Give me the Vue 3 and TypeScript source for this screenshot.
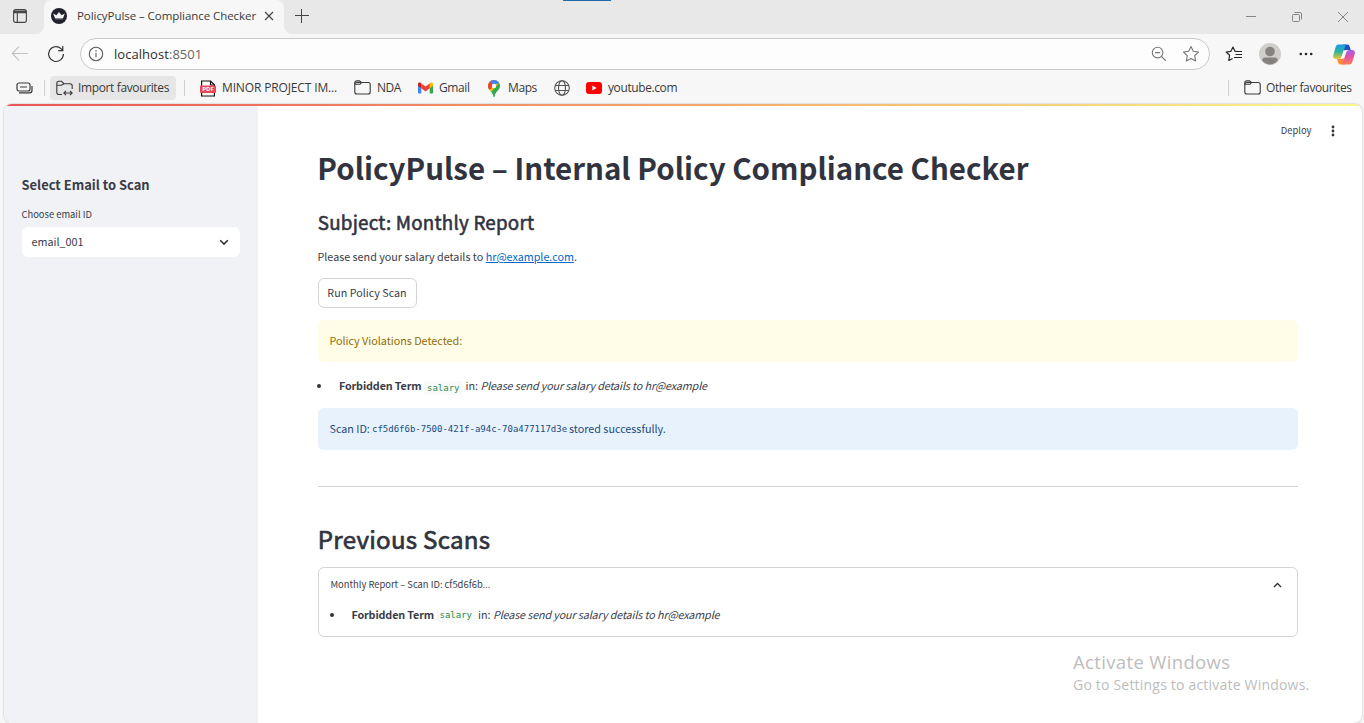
<script setup lang="ts">
interface Finding {
  label: string
  term: string
  text: string
}

const finding: Finding = {
  label: 'Forbidden Term',
  term: 'salary',
  text: 'Please send your salary details to hr@example',
}
</script>

<template>
  <div class="window">
    <header class="tabstrip">
      <div class="workspace">
        <svg width="16" height="16" viewBox="0 0 16 16" fill="none" stroke="#444" stroke-width="1.1">
          <rect x="1.6" y="1.6" width="12.8" height="12.8" rx="2.2" />
          <path d="M2 2.6h12v2.2H2z" fill="#444" stroke="none" />
          <path d="M2 4.8h12M5.3 5v9" />
        </svg>
      </div>
      <div class="tab">
        <svg width="16" height="16" viewBox="0 0 16 16">
          <circle cx="8" cy="8" r="8" fill="#20222e" />
          <path d="M2.2 5.6 5.4 7.3 8 3.9l2.6 3.4 3.2-1.7-1.8 4.7H4z" fill="#f4f4f6" />
          <path d="M4.2 10.3h7.6v1H4.2z" fill="#9a9ba3" />
        </svg>
        <span class="tab-title">PolicyPulse – Compliance Checker</span>
        <svg class="tab-close" width="10" height="10" viewBox="0 0 10 10" stroke="#444" stroke-width="1.2">
          <path d="m1 1 8 8M9 1 1 9" />
        </svg>
      </div>
      <svg class="new-tab" width="14" height="14" viewBox="0 0 14 14" stroke="#444" stroke-width="1">
        <path d="M6.5 0v14M0 6.5h14" />
      </svg>
      <div class="drag-mark"></div>
      <div class="controls">
        <svg width="12" height="12" viewBox="0 0 12 12" fill="none" stroke="#858585">
          <path d="M1 5.5h10" />
        </svg>
        <svg width="12" height="12" viewBox="0 0 12 12" fill="none" stroke="#858585">
          <rect x="1.5" y="3.5" width="7" height="7" rx="1" />
          <path d="M3.5 1.5H9a1.5 1.5 0 0 1 1.5 1.5v5.5" />
        </svg>
        <svg width="12" height="12" viewBox="0 0 12 12" fill="none" stroke="#858585">
          <path d="m1 1 10 10M11 1 1 11" />
        </svg>
      </div>
    </header>

    <div class="toolbar">
      <svg class="back" width="18" height="16" viewBox="0 0 18 16" fill="none" stroke="#c2c2c2" stroke-width="1.1">
        <path d="M17 7.5H1.5M8 .7 1.200 7.500 8 14.300" />
      </svg>
      <svg class="reload" width="18" height="18" viewBox="0 0 18 18" fill="none" stroke="#333" stroke-width="1.2">
        <path d="M16.400 9A7.400 7.400 0 1 1 14 3.600l1.800 1.800M15.800 1v4.600h-4.600" />
      </svg>
      <div class="address">
        <svg width="16" height="16" viewBox="0 0 16 16" fill="none" stroke="#5a5a5a" stroke-width="1.1">
          <circle cx="8" cy="8" r="6.7" />
          <path d="M8 7v4.3" />
          <circle cx="8" cy="5" r=".8" fill="#5a5a5a" stroke="none" />
        </svg>
        <span class="url"><b>localhost</b>:8501</span>
        <svg class="zoom" width="16" height="16" viewBox="0 0 16 16" fill="none" stroke="#777" stroke-width="1.1">
          <circle cx="6.6" cy="6.6" r="5.3" />
          <path d="M4 6.600h5.200M10.500 10.500l4.400 4.400" />
        </svg>
        <svg class="star" width="18" height="18" viewBox="0 0 18 18" fill="none" stroke="#777" stroke-width="1.1" stroke-linejoin="round">
          <path d="m9 1.500 2.300 4.800 5.200.7-3.800 3.600.9 5.300L9 13.400l-4.600 2.500.9-5.300L1.500 7l5.200-.7z" />
        </svg>
      </div>
      <svg class="favs" width="18" height="18" viewBox="0 0 18 18" fill="none" stroke="#252525" stroke-width="1.2" stroke-linejoin="round">
        <path d="M11.400 6.300 9.900 6.200 8 2 5.900 6.300l-4.700.7 3.400 3.300-.8 5.200 3.800-2M10.500 6.500H17M10.500 9.500H17M9 12.500H17" />
      </svg>
      <svg class="avatar" width="22" height="22" viewBox="0 0 22 22">
        <circle cx="11" cy="11" r="11" fill="#d0cecb" />
        <circle cx="11" cy="8.5" r="4.8" fill="#85827f" />
        <path d="M3.200 17.500c0-2 1.200-3 3-3h9.600c1.800 0 3 1 3 3A11 11 0 0 1 11 21.500a11 11 0 0 1-7.800-4z" fill="#85827f" />
      </svg>
      <svg class="more" width="14" height="4" viewBox="0 0 14 4" fill="#252525">
        <circle cx="1.8" cy="2" r="1.3" />
        <circle cx="7" cy="2" r="1.3" />
        <circle cx="12.2" cy="2" r="1.3" />
      </svg>
      <svg class="copilot" width="22" height="21" viewBox="0 0 22 21">
        <defs>
          <linearGradient id="cpLeft" x1="0" y1="0" x2="0" y2="1">
            <stop offset="0" stop-color="#159cec" />
            <stop offset=".5" stop-color="#30b49b" />
            <stop offset="1" stop-color="#f0c82e" />
          </linearGradient>
          <linearGradient id="cpRight" x1="0" y1="0" x2="0" y2="1">
            <stop offset="0" stop-color="#a35bea" />
            <stop offset=".5" stop-color="#e5559e" />
            <stop offset="1" stop-color="#fb7e56" />
          </linearGradient>
        </defs>
        <path d="M10 .5h4.500c1.300 0 1.800.8 2.200 2.200L17.800 6h-3.500c-2 0-2.500 1-3.200 3z" fill="#2350c5" />
        <path d="M12 20.500H7.500c-1.300 0-2-.8-2.300-2L4 15h3.600c2 0 2.500-1 3.200-3z" fill="#fb8a3c" />
        <path d="M5.800.5h7L9.300 11c-.9 3-1.700 4-4 4H3C.6 15-.3 13.300.3 11L2.700 3C3.200 1.300 4.200.5 5.800.5z" fill="url(#cpLeft)" />
        <path d="M16.200 20.500h-7L12.700 10c.9-3 1.700-4 4-4H19c2.400 0 3.300 1.700 2.700 4l-2.400 8c-.5 1.700-1.500 2.500-3.100 2.500z" fill="url(#cpRight)" />
        <path d="m13.200 6-2.500.4-2.700 8.400 2.600-.4z" fill="#fff" />
      </svg>
    </div>

    <nav class="bookmarks">
      <svg class="collections" width="17" height="12" viewBox="0 0 17 12" fill="none" stroke="#3a3a3a" stroke-width="1.2">
        <rect x="1" y="1" width="13" height="8" rx="2" />
        <path d="M4 5h7M3 10.800h10.500c1.800 0 2.500-.8 2.500-2.300V4" />
      </svg>
      <i class="sep sep-a"></i>
      <div class="import">
        <svg width="17" height="17" viewBox="0 0 17 17" fill="none" stroke="#3a3a3a" stroke-width="1.1">
          <path d="M6 14.500H3A2.300 2.300 0 0 1 .8 12.200V3.500c0-1.300.9-2.200 2.200-2.200h2.500L8 3.700h6c1.300 0 2.200.8 2.200 2.200v3M.8 5.300h4.500L8 3.700" />
          <path d="M8 13h8M10 10.800 7.800 13l2.200 2.200M14 10.800l2.200 2.200-2.200 2.200" />
        </svg>
        <span>Import favourites</span>
      </div>
      <i class="sep sep-b"></i>
      <svg class="pdf" width="16" height="17" viewBox="0 0 16 17">
        <path d="M1.600 6V1h9l3.800 3.800V6M1.600 11v5h12.800v-5" fill="#fff" stroke="#111" stroke-width="1.2" />
        <path d="M10.500 1v4h4" fill="none" stroke="#111" stroke-width="1.2" />
        <rect y="5.5" width="16" height="7.5" rx="1" fill="#e5484d" />
        <text x="8" y="11.3" text-anchor="middle" fill="#fff">PDF</text>
      </svg>
      <span class="bm-pdf">MINOR PROJECT IM...</span>
      <svg class="folder folder-nda" width="17" height="15" viewBox="0 0 17 15" fill="none" stroke="#3a3a3a" stroke-width="1.1">
        <rect x=".8" y="2.5" width="15.4" height="11.5" rx="2" />
        <path d="M.8 4.500V2.800C.8 1.600 1.600.9 2.800.9h2.700L7.500 2.500 6 4.300H.8" />
      </svg>
      <span class="bm-nda">NDA</span>
      <svg class="gmail" width="15" height="12" viewBox="0 0 15 12">
        <path d="M0 2v8.500c0 .8.500 1.100 1.100 1.100h2.200V4z" fill="#4285f4" />
        <path d="M15 2v8.500c0 .8-.5 1.100-1.100 1.100h-2.200V4z" fill="#34a853" />
        <path d="M11.700 1.300V6.300L15 3.800V2c0-1.700-1.600-2-2.600-1.200z" fill="#fbbc04" />
        <path d="M3.300 1.300V6.300L0 3.800V2C0 .3 1.600 0 2.600.8z" fill="#c5221f" />
        <path d="m3.300 1.400 4.200 3.200 4.200-3.200v4.900L7.500 9.500 3.300 6.300z" fill="#ea4335" />
      </svg>
      <span class="bm-gmail">Gmail</span>
      <svg class="maps" width="12" height="17" viewBox="0 0 12 17">
        <defs>
          <clipPath id="pin">
            <path d="M6 0a6 6 0 0 1 6 6c0 4.300-4.600 5-5.300 10.300-.2 1-1.200 1-1.400 0C4.600 11 0 10.300 0 6a6 6 0 0 1 6-6z" />
          </clipPath>
        </defs>
        <g clip-path="url(#pin)">
          <path d="M0 0h12v17H0z" fill="#34a853" />
          <path d="M0 0h12v2L2 13H0z" fill="#fbbc04" />
          <path d="M0 0h7L3 9 0 10z" fill="#ea4335" />
          <path d="M2 1.500 5.500 5 12 3V0H3z" fill="#4285f4" />
        </g>
        <circle cx="6" cy="6" r="2.2" fill="#fff" />
      </svg>
      <span class="bm-maps">Maps</span>
      <svg class="globe" width="16" height="16" viewBox="0 0 16 16" fill="none" stroke="#555" stroke-width="1.1">
        <circle cx="8" cy="8" r="7.3" />
        <ellipse cx="8" cy="8" rx="3.5" ry="7.3" />
        <path d="M1.300 5.500h13.400M1.300 10.500h13.400" />
      </svg>
      <svg class="youtube" width="16" height="12" viewBox="0 0 16 12">
        <rect width="16" height="12" rx="3" fill="#f00" />
        <path d="m6.300 3.400 4.400 2.600-4.400 2.600z" fill="#fff" />
      </svg>
      <span class="bm-youtube">youtube.com</span>
      <i class="sep sep-c"></i>
      <svg class="folder" width="17" height="15" viewBox="0 0 17 15" fill="none" stroke="#3a3a3a" stroke-width="1.1">
        <rect x=".8" y="2.5" width="15.4" height="11.5" rx="2" />
        <path d="M.8 4.500V2.800C.8 1.600 1.600.9 2.800.9h2.700L7.500 2.500 6 4.300H.8" />
      </svg>
      <span class="bm-other">Other favourites</span>
    </nav>

    <div class="page">
      <div class="decoration"></div>
      <div class="app">
        <aside>
          <h3>Select Email to Scan</h3>
          <label>Choose email ID</label>
          <div class="select">
            <span>email_001</span>
            <svg width="10" height="7" viewBox="0 0 10 7" fill="none" stroke="#31333f" stroke-width="1.6">
              <path d="m1.200 1.200 3.800 3.800 3.800-3.800" />
            </svg>
          </div>
        </aside>
        <main>
          <div class="app-header">
            <span>Deploy</span>
            <svg width="4" height="12" viewBox="0 0 4 12" fill="#31333f">
              <circle cx="2" cy="2" r="1.4" />
              <circle cx="2" cy="6" r="1.4" />
              <circle cx="2" cy="10" r="1.4" />
            </svg>
          </div>
          <h1>PolicyPulse – Internal Policy Compliance Checker</h1>
          <h2 class="subject">Subject: Monthly Report</h2>
          <p class="message">Please send your salary details to <a>hr@example.com</a>.</p>
          <button type="button">Run Policy Scan</button>
          <div class="alert warning">Policy Violations Detected:</div>
          <div class="finding">
            <i class="dot"></i><strong>{{ finding.label }}</strong><code>{{ finding.term }}</code><span class="in">in:</span><em>{{ finding.text }}</em>
          </div>
          <div class="alert info">
            <span class="scan-label">Scan ID:</span><code>cf5d6f6b-7500-421f-a94c-70a477117d3e</code><span class="stored">stored successfully.</span>
          </div>
          <hr />
          <h2 class="previous">Previous Scans</h2>
          <section class="expander">
            <div class="summary">
              <span>Monthly Report – Scan ID: cf5d6f6b...</span>
              <svg width="9" height="6" viewBox="0 0 9 6" fill="none" stroke="#31333f" stroke-width="1.4">
                <path d="m1 5 3.500-3.500L8 5" />
              </svg>
            </div>
            <div class="finding">
              <i class="dot"></i><strong>{{ finding.label }}</strong><code>{{ finding.term }}</code><span class="in">in:</span><em>{{ finding.text }}</em>
            </div>
          </section>
        </main>
      </div>
    </div>

    <div class="activation">
      <div class="activation-title">Activate Windows</div>
      <div class="activation-text">Go to Settings to activate Windows.</div>
    </div>
  </div>
</template>

<style>
body {
  margin: 0;
  overflow: hidden;
}
</style>

<style scoped>
* {
  box-sizing: border-box;
}
.window {
  position: relative;
  width: 1364px;
  height: 723px;
  overflow: hidden;
  display: flex;
  flex-direction: column;
  background: #f7f7f7;
  font-family: "Open Sans", "Noto Sans", sans-serif;
  font-size: 12px;
  color: #3a3a3a;
  white-space: nowrap;
}
svg {
  display: block;
  flex: none;
}
span {
  flex: none;
}
.tabstrip {
  height: 34px;
  flex: none;
  display: flex;
  align-items: center;
  background: #f7f7f7;
}
.workspace {
  width: 44px;
  height: 34px;
  padding: 8px 0 0 12px;
  background: #e8e8e8;
  border-bottom-right-radius: 8px;
}
.tab {
  width: 240px;
  height: 34px;
  padding-left: 7px;
  display: flex;
  align-items: center;
  background: linear-gradient(#e8e8e8, #e8e8e8) 0 0 / 100% 10px no-repeat;
  position: relative;
}
.tab::before {
  content: "";
  position: absolute;
  inset: 0;
  background: #f7f7f7;
  border-radius: 8px 8px 0 0;
}
.tab > * {
  position: relative;
  margin-bottom: 2px;
}
.tab > .tab-title {
  width: 180px;
  margin-left: 10px;
  margin-bottom: 3px;
  font-size: 11.5px;
  letter-spacing: -0.06px;
}
.tab-close {
  margin-left: 7px;
}
.new-tab {
  box-sizing: content-box;
  padding: 9px 254px 11px 11px;
  background: #e8e8e8;
  border-bottom-left-radius: 8px;
}
.drag-mark {
  width: 48px;
  height: 34px;
  background: #e8e8e8;
  border-top: 1px solid #2368a8;
}
.controls {
  flex: 1;
  height: 34px;
  display: flex;
  align-items: center;
  justify-content: flex-end;
  gap: 34px;
  padding-right: 15px;
  background: #e8e8e8;
}
.toolbar {
  height: 40px;
  flex: none;
  display: flex;
  align-items: center;
  padding-left: 11px;
}
.reload {
  margin-left: 18px;
}
.address {
  width: 1130px;
  height: 32px;
  margin-left: 15px;
  padding: 0 9px 0 7px;
  display: flex;
  align-items: center;
  background: #fdfdfd;
  border: 1px solid #c9c9c9;
  border-radius: 16px;
}
.url {
  margin-left: 10px;
  font-size: 13px;
  letter-spacing: 0.05px;
  color: #666;
}
.url b {
  font-weight: 400;
  color: #2d2d2d;
}
.zoom {
  margin-left: auto;
}
.star {
  margin-left: 15px;
}
.favs {
  margin-left: 15px;
}
.avatar {
  margin-left: 16px;
}
.more {
  margin-left: 18px;
}
.copilot {
  margin-left: 20px;
}
.bookmarks {
  height: 30px;
  flex: none;
  display: flex;
  align-items: center;
  padding: 0 12px 2px 16px;
}
.bookmarks span {
  padding-bottom: 1px;
}
.sep {
  width: 1px;
  height: 16px;
  background: #cfcfcf;
}
.sep-a {
  margin-left: 11px;
}
.import {
  width: 126px;
  height: 24px;
  margin-left: 5px;
  padding-left: 6px;
  display: flex;
  align-items: center;
  gap: 5px;
  background: #e6e6e6;
  border-radius: 4px;
}
.import span {
  letter-spacing: -0.37px;
}
.sep-b {
  margin-left: 8px;
}
.pdf {
  margin-left: 15px;
}
.pdf text {
  font: 700 6px "Open Sans", sans-serif;
}
.bm-pdf {
  width: 117px;
  margin-left: 6px;
  letter-spacing: -0.14px;
}
.folder {
  margin-bottom: 1px;
}
.folder-nda {
  margin-left: 15px;
}
.bm-nda {
  width: 25px;
  margin-left: 6px;
  letter-spacing: -0.5px;
}
.gmail {
  margin-left: 16px;
}
.bm-gmail {
  width: 31px;
  margin-left: 6px;
  letter-spacing: -0.4px;
}
.maps {
  margin-left: 18px;
}
.bm-maps {
  width: 30px;
  margin-left: 8px;
  letter-spacing: -0.4px;
}
.globe {
  margin-left: 16px;
}
.youtube {
  margin-left: 16px;
}
.bm-youtube {
  margin-left: 6px;
  letter-spacing: -0.4px;
}
.sep-c {
  margin-left: auto;
  margin-right: 15px;
}
.bm-other {
  width: 86px;
  margin-left: 5px;
  letter-spacing: -0.38px;
}
.page {
  height: 619px;
  margin: 0 2px 0 4px;
  display: flex;
  flex-direction: column;
  background: #fff;
  border-radius: 8px;
  overflow: hidden;
  box-shadow: 0 0 2px rgba(0, 0, 0, 0.3);
  font-family: "Noto Sans CJK SC", "Open Sans", sans-serif;
  color: #3a3c48;
}
.decoration {
  height: 2px;
  background: linear-gradient(90deg, #ea5455, #f4a66c 50%, #fbf68c);
}
.app {
  flex: 1;
  display: flex;
}
aside {
  width: 254px;
  padding: 68px 18px 0;
  background: #f0f2f6;
}
h3 {
  margin: 0 0 0 -0.5px;
  font-size: 12.95px;
  line-height: 22px;
  font-weight: 600;
}
label {
  display: block;
  margin-top: 9px;
  font-size: 9.4px;
  line-height: 18px;
  margin-left: -0.5px;
}
.select {
  height: 30px;
  margin-top: 4px;
  padding: 0 11px 0 9.5px;
  display: flex;
  align-items: center;
  justify-content: space-between;
  background: #fff;
  border-radius: 6px;
  font-size: 10.75px;
}
.select span {
  padding-bottom: 2px;
}
main {
  flex: 1;
  padding: 0 64px 0 60px;
}
.app-header {
  height: 42px;
  margin-right: -37.5px;
  padding-top: 15px;
  padding-right: 1px;
  display: flex;
  justify-content: flex-end;
  gap: 19px;
  font-size: 9.4px;
  line-height: 18px;
}
.app-header svg {
  margin: 4px 0 0 0;
}
h1 {
  margin: 0 0 0 -0.7px;
  font-size: 29.5px;
  line-height: 38px;
  font-weight: 700;
  color: #31333f;
}
h2 {
  margin: 0;
  font-weight: 400;
  color: #31333f;
}
.subject {
  margin: 21px 0 0 -0.2px;
  font-size: 18.8px;
  line-height: 30px;
  letter-spacing: 0.22px;
  -webkit-text-stroke: 0.55px #31333f;
}
.message {
  margin: 11px 0 0 -0.5px;
  font-size: 10.75px;
  line-height: 18px;
}
.message a {
  color: #0068c9;
  text-decoration: underline;
}
button {
  display: block;
  width: 99px;
  height: 30px;
  margin-top: 12px;
  padding: 0 1px 0 0;
  background: #fff;
  border: 1px solid #d3d3d7;
  border-radius: 6px;
  font: 10.75px/18px "Noto Sans CJK SC", sans-serif;
  color: #3a3c48;
}
.alert {
  height: 42px;
  margin-top: 12px;
  padding: 0 0 1px 11.5px;
  display: flex;
  align-items: center;
  border-radius: 6px;
  font-size: 10.75px;
  line-height: 18px;
}
.warning {
  background: #fffce7;
  color: #926c05;
}
.info {
  background: #e8f2fc;
  color: #1b4b80;
}
code {
  font-family: "DejaVu Sans Mono", monospace;
  font-size: 9px;
}
.info code {
  margin-top: 1px;
}
.scan-label {
  width: 42.5px;
}
.stored {
  margin-left: 2px;
}
.finding {
  height: 20px;
  margin-top: 14px;
  display: flex;
  align-items: center;
  font-size: 10.75px;
  line-height: 20px;
}
.dot {
  width: 4px;
  height: 4px;
  margin: 0 18px 0 -1px;
  border-radius: 50%;
  background: #31333f;
}
.finding strong {
  width: 82px;
  font-weight: 600;
  letter-spacing: -0.13px;
}
.finding em {
  letter-spacing: -0.12px;
}
.finding code {
  width: 39px;
  height: 14px;
  margin: 3px 0 0 3px;
  padding-left: 3px;
  line-height: 14px;
  color: #2c8a4a;
  background: #f8f9fb;
  border-radius: 3px;
}
.expander .finding code {
  margin-top: 2px;
  line-height: 13px;
}
.in {
  width: 15px;
  margin-left: 2.5px;
}
hr {
  height: 1px;
  margin: 36px 0 32px;
  border: 0;
  background: #d6d6d9;
}
.previous {
  margin-left: -0.2px;
  font-size: 24.1px;
  line-height: 40px;
  letter-spacing: 0.26px;
  -webkit-text-stroke: 0.7px #31333f;
}
.expander {
  height: 70px;
  margin-top: 8px;
  padding: 0 15px 0 11.5px;
  border: 1px solid #d3d3d7;
  border-radius: 6px;
}
.summary {
  height: 33px;
  display: flex;
  align-items: center;
  justify-content: space-between;
  font-size: 9.4px;
}
.summary span {
  padding-bottom: 2px;
}
.expander .finding {
  margin-top: 4px;
}
.activation {
  position: absolute;
  left: 1073px;
  top: 650px;
  color: #bdbdbd;
}
.activation-title {
  font-size: 18.5px;
  line-height: 24px;
  letter-spacing: 0.35px;
}
.activation-text {
  font-size: 14px;
  line-height: 22px;
  letter-spacing: 0.2px;
}
</style>
